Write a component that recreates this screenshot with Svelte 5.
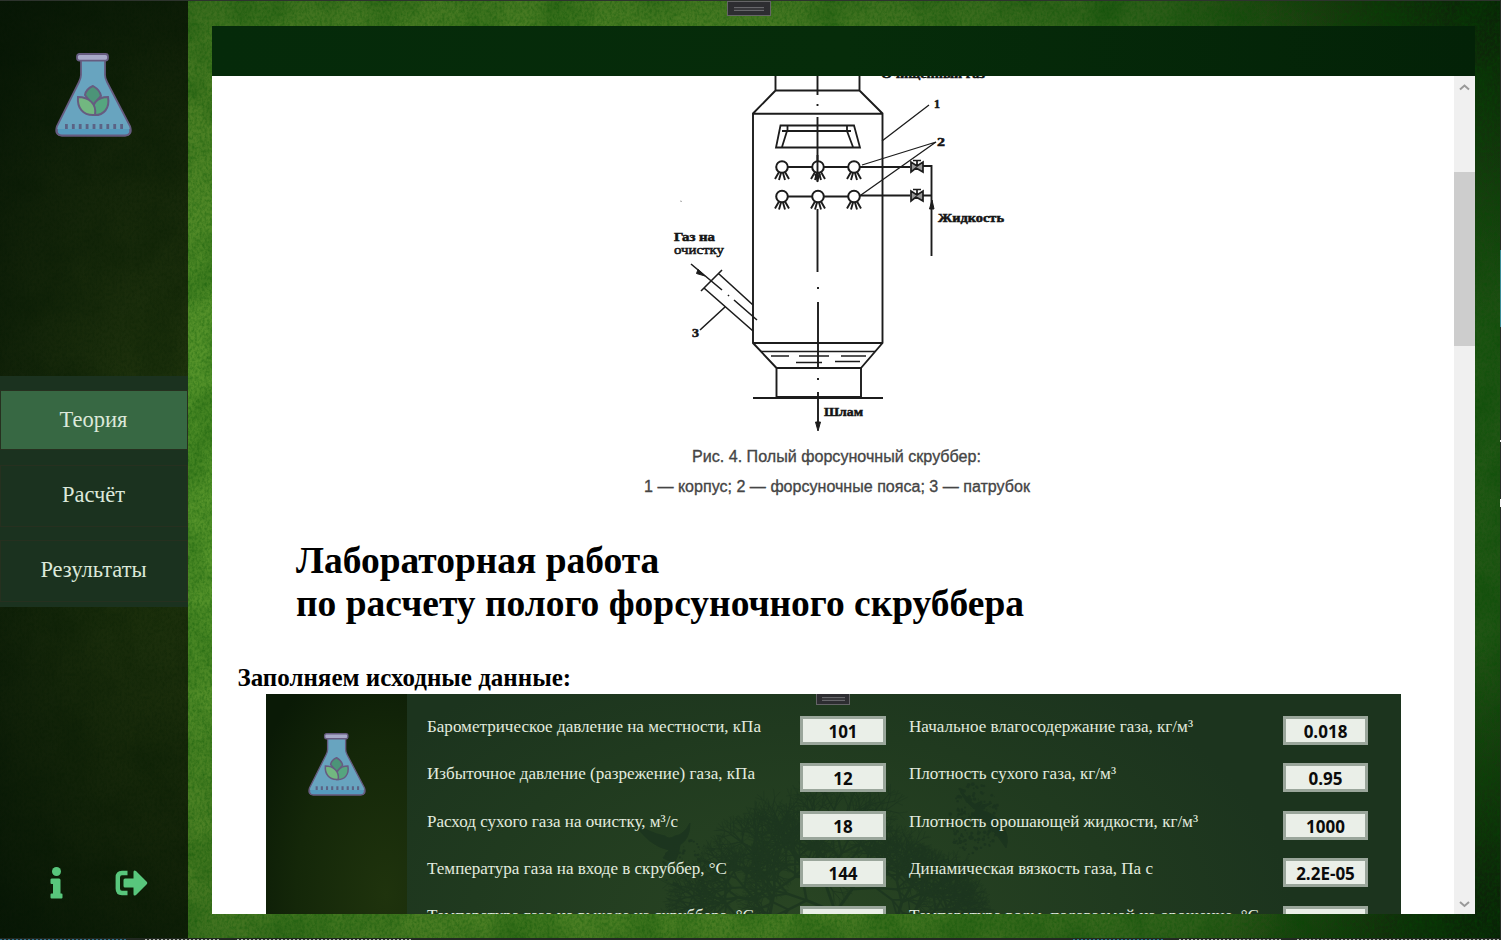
<script>
  const nav = ['Теория', 'Расчёт', 'Результаты'];
  let active = $state('Теория');

  const rows = [
    ['Барометрическое давление на местности, кПа', '101', 'Начальное влагосодержание газа, кг/м³', '0.018', 334, 284],
    ['Избыточное давление (разрежение) газа, кПа', '12', 'Плотность сухого газа, кг/м³', '0.95', 328, 207],
    ['Расход сухого газа на очистку, м³/с', '18', 'Плотность орошающей жидкости, кг/м³', '1000', 251, 289],
    ['Температура газа на входе в скруббер, °С', '144', 'Динамическая вязкость газа, Па с', '2.2E-05', 300, 244],
    ['Температура газа на выходе из скруббера, °С', '', 'Температура воды, подаваемой на орошение, °С', '', 327, 350]
  ];

  let seed = 11;
  const rnd = () => (seed = (seed * 16807) % 2147483647) / 2147483647;

  function grow(x, y, a, len, depth, out) {
    const x2 = x + Math.cos(a) * len;
    const y2 = y + Math.sin(a) * len;
    out[depth] = (out[depth] ?? '') + `M${x.toFixed(1)} ${y.toFixed(1)}L${x2.toFixed(1)} ${y2.toFixed(1)}`;
    if (depth === 0) return;
    const n = depth > 4 ? 3 : 2 + (rnd() > 0.4 ? 1 : 0);
    for (let i = 0; i < n; i++) {
      const spread = (i - (n - 1) / 2) * 0.75 + (rnd() - 0.5) * 0.6;
      grow(x2, y2, a + spread, len * (0.64 + rnd() * 0.24), depth - 1, out);
    }
  }
  const branches = [];
  grow(575, 260, -1.7, 42, 7, branches);
  grow(525, 258, -2.2, 38, 7, branches);
  grow(605, 258, -0.8, 34, 7, branches);

  const specks = (cx, cy, rx, ry, n) =>
    Array.from({ length: n }, () => {
      const t = rnd() * 6.28, r = Math.sqrt(rnd());
      return { x: cx + Math.cos(t) * r * rx, y: cy + Math.sin(t) * r * ry, r: 0.4 + rnd() * 1.5 };
    });
  const dust = [...specks(708, 125, 26, 36, 190), ...specks(425, 172, 30, 26, 90)];

  const jets = [[782, 167], [818, 167], [854, 167], [782, 196.5], [818, 196.5], [854, 196.5]];
</script>

{#snippet flask()}
  <svg class="flask" viewBox="0 0 77 84">
    <path d="M26 7H50V22Q50 25 52 29L75 73Q78 82 70 82.500H7Q-1 82 2 73L24 29Q26 25 26 22Z" fill="#68a4bf" stroke="#665c80" stroke-width="1.800" />
    <path d="M3 76H74Q75 82 70 82H7Q2 82 3 76Z" fill="#559abd" />
    <path d="M2 76Q1 82.500 7 82.500H70Q76 82.500 75 76" fill="none" stroke="#665c80" stroke-width="1.800" />
    <rect x="22" y="1" width="31" height="6.600" rx="2.500" fill="#a7a9c8" stroke="#665c80" stroke-width="1.800" />
    <path d="M10 73.500H69" stroke="#5b6385" stroke-width="5" stroke-dasharray="2.800 4.100" />
    <path d="M30 42Q31 36 38 33Q45 37 46 43L38 52Z" fill="#4c9478" stroke="#665c80" stroke-width="2" />
    <path d="M38 62C36 51 42 44 53 44C55 55 49 63 38 62Z" fill="#55a57f" stroke="#665c80" stroke-width="2" />
    <path d="M38 62C28 62 22 55 23 44C34 44 42 51 40 62Z" fill="#72b780" stroke="#665c80" stroke-width="2" />
  </svg>
{/snippet}

<div class="window">
  <svg class="grain" width="1501" height="940">
    <filter id="grain" x="0" y="0" width="100%" height="100%">
      <feTurbulence type="fractalNoise" baseFrequency="0.4 0.3" numOctaves="3" seed="4" />
      <feColorMatrix values="0 0 0 0 0  0 0 0 0 0.080  0 0 0 0 0  0.750 0 0 0 -0.27" />
    </filter>
    <filter id="blotch" x="0" y="0" width="100%" height="100%">
      <feTurbulence type="fractalNoise" baseFrequency="0.022" numOctaves="4" seed="9" />
      <feColorMatrix values="0 0 0 0 0  0 0 0 0 0.060  0 0 0 0 0  0.700 0 0 0 -0.27" />
    </filter>
    <rect width="1501" height="940" filter="url(#grain)" />
    <rect width="1501" height="940" filter="url(#blotch)" />
  </svg>
  <aside>
    <div class="logo">{@render flask()}</div>
    <nav>
      {#each nav as item}
        <button class:active={active === item} onclick={() => (active = item)}>{item}</button>
      {/each}
    </nav>
    <div class="tools">
      <svg width="13" height="32" viewBox="0 0 13 32" fill="#58c77c">
        <circle cx="6.500" cy="4.500" r="4.500" />
        <path d="M2 11.500H9Q10.500 11.500 10.500 13V26.500H11.500Q12.500 26.500 12.500 27.500V30.500Q12.500 31.500 11.500 31.500H1.500Q.5 31.500 .5 30.500V27.500Q.5 26.500 1.500 26.500H3V17H1.500Q.5 17 .5 16V12.500Q.5 11.500 2 11.500Z" />
      </svg>
      <svg width="33" height="26" viewBox="0 0 33 26" fill="#58c77c">
        <path d="M12.500 3H7Q2.800 3 2.800 7.500V18.500Q2.800 23 7 23H12.500" fill="none" stroke="#58c77c" stroke-width="4.400" stroke-linejoin="round" />
        <path d="M10 8.500H18.500V2Q18.500-.5 21 1L31.500 11.500Q33 13 31.500 14.500L21 25Q18.500 26.500 18.500 24V17.500H10Q8.500 17.500 8.500 16V10Q8.500 8.500 10 8.500Z" />
      </svg>
    </div>
  </aside>

  <main>
    <header></header>
    <div class="viewer">
      <article>
        <svg class="figure" viewBox="640 76 400 434" width="400" height="434" fill="none" stroke="#1c1c1c" stroke-width="1.900">
          <g class="label big"><text x="881" y="77.500" textLength="104" lengthAdjust="spacingAndGlyphs">Очищенный газ</text></g>
          <path d="M775.500 76V90.500L753 113.500V343L776.500 368V397M859.500 76V90.500L882.500 113.500V343L861 368V397M775 90.500H860M753 113.800H883M753 343H883M776 368H862M753 398H883M777 397H861" />
          <path d="M817.500 76V95M817.500 104V106M817.500 117V182M817.500 209V272M818 287V289M818 302V367M818 378V380M818 392V424" />
          <path d="M780.500 125.500H854L860 147.500H776ZM787.500 125V131M847 125V131M787 131L782 147M847 131L853 147M782 131H851" stroke-width="1.800" />
          <path d="M788 167H812M824 167H848M860 167H910M923 166H931.500M788 196.500H812M824 196.500H848M860 195.500H910M923 195.500H931" />
          <path d="M931.500 165V256" />
          <path d="M882 141L929 105M862 165L936 142L861 195" stroke-width="1.300" />
          {#each jets as [x, y]}
            <circle cx={x} cy={y} r="5.800" fill="#fff" stroke-width="2" />
            <path d="M{x - 3} {y + 5}L{x - 7} {y + 12}M{x - 1} {y + 6}L{x - 3} {y + 13}M{x + 1} {y + 6}L{x + 3} {y + 13}M{x + 3} {y + 5}L{x + 7} {y + 12}" stroke-width="1.900" />
          {/each}
          <path d="M817.500 155V181M815 174L817.500 180L820 174" />
          {#each [166, 195] as y}
            <path d="M911 {y - 4}V{y + 6}L916 {y + 2}L923 {y + 6}V{y - 4}L917 {y}ZM917 {y}V{y - 5}M913 {y - 5.5}H921" fill="#999" stroke-width="1.700" />
          {/each}
          <path d="M932 200L929.500 209H934ZM818 431L815.500 422H820.500ZM705 276L698 269.500L696.500 273.500Z" fill="#1c1c1c" stroke-width="1" />
          <path d="M691 264L722 290M728 295L729 296M734 300L757 320M719 274L753 305M704 288L753 331M701 291L722 270M725 307L700 330" stroke-width="1.600" />
          <path d="M761 351.500H875" stroke-width="1.700" />
          <path d="M771 356H789M799 356H829M841 356H866M796 362.500H822M835 361.500H860" stroke-width="1.700" />
          <path d="M680 201L682 201.500" stroke="#aaa" stroke-width="1" />
          <g class="label">
            <text x="674" y="241" textLength="41" lengthAdjust="spacingAndGlyphs">Газ на</text>
            <text class="soft" x="674" y="254" textLength="50" lengthAdjust="spacingAndGlyphs">очистку</text>
            <text x="938" y="222" textLength="66" lengthAdjust="spacingAndGlyphs">Жидкость</text>
            <text x="824" y="416" textLength="39" lengthAdjust="spacingAndGlyphs">Шлам</text>
            <text x="934" y="108">1</text>
            <text x="937" y="146" textLength="8" lengthAdjust="spacingAndGlyphs">2</text>
            <text x="692" y="337" textLength="7" lengthAdjust="spacingAndGlyphs">3</text>
          </g>
          <g class="caption">
            <text x="692" y="461.500" textLength="289" lengthAdjust="spacingAndGlyphs">Рис. 4. Полый форсуночный скруббер:</text>
            <text x="644" y="492" textLength="386" lengthAdjust="spacingAndGlyphs">1 — корпус; 2 — форсуночные пояса; 3 — патрубок</text>
          </g>
        </svg>

        <h1>Лабораторная работа<br />по расчету полого форсуночного скруббера</h1>
        <h2>Заполняем исходные данные:</h2>

        <section class="shot">
          <div class="shot-side">{@render flask()}</div>
          <div class="form">
            <svg class="scene" width="1135" height="220" viewBox="0 0 1135 220" stroke="#18301e" fill="#18301e">
              {#each branches as d, i}
                <path {d} stroke-width={0.5 + i * 0.4} fill="none" />
              {/each}
              <path d="M366 126Q382 139 399 142Q403 146 409 142Q418 141 424 129Q424 145 414 151Q413 162 408 169L397 164L403 156Q382 152 366 126Z" />
              <path d="M693 94L703 106L711 112L726 109L714 116Q729 119 736 130Q744 142 740 154Q732 140 718 128L706 122L710 116Q698 108 693 94Z" />
              {#each dust as p}<circle cx={p.x} cy={p.y} r={p.r} stroke="none" />{/each}
            </svg>
            {#each rows as [a, av, b, bv, aw, bw], i}
              <div class="row">
                <svg class="cell" width="373" height="29"><text x="0" y={i === 4 ? 15.2 : 16} textLength={aw} lengthAdjust="spacingAndGlyphs">{a}</text></svg>
                <output>{av}</output>
                <svg class="cell second" width="374" height="29"><text x="0" y={i === 4 ? 15.2 : 16} textLength={bw} lengthAdjust="spacingAndGlyphs">{b}</text></svg>
                <output>{bv}</output>
              </div>
            {/each}
            <i class="grip small"></i>
          </div>
        </section>
      </article>
      <div class="scroll">
        <svg width="21" height="21" viewBox="0 0 21 21"><path d="M6 13.500L10.500 9.500L15 13.500" /></svg>
        <div class="thumb"></div>
        <svg width="21" height="21" viewBox="0 0 21 21"><path d="M6 9L10.500 13L15 9" /></svg>
      </div>
    </div>
  </main>

  <i class="grip"></i>
  <i class="edge top"></i>
  <i class="edge right"></i>
  <i class="edge bottom"></i>
</div>

<style>
  :global(body) { margin: 0; overflow: hidden; }
  .window {
    position: relative;
    isolation: isolate;
    display: grid;
    grid-template-columns: 188px 1fr;
    width: 1501px;
    height: 940px;
    overflow: hidden;
    background:
      radial-gradient(circle 330px at 1501px 0, rgba(5, 20, 5, .65), transparent),
      radial-gradient(circle 300px at 1501px 940px, rgba(5, 20, 5, .75), transparent),
      linear-gradient(90deg, transparent 82%, rgba(0, 70, 10, .25) 98%),
      radial-gradient(ellipse 950px 640px at 570px 480px, #5b9b2b 0%, #55932a 42%, #4a7d23 70%, #2e5e19 95%, #163009 125%);
    font-family: "Liberation Serif", serif;
  }
  .grain { position: absolute; inset: 0; z-index: -1; }
  aside {
    display: flex;
    flex-direction: column;
    background:
      radial-gradient(ellipse 230px 560px at 150px 480px, rgba(60, 40, 0, .12), rgba(0, 8, 0, .5)),
      linear-gradient(90deg, rgba(6, 20, 6, .76), rgba(6, 16, 4, .68));
  }
  .logo { height: 376px; padding: 53px 0 0 55px; box-sizing: border-box; }
  .logo .flask { width: 77px; height: 84px; }
  .flask { display: block; }
  nav {
    display: flex;
    flex-direction: column;
    gap: 13px;
    height: 231px;
    margin-bottom: 1px;
    padding: 14px 0 0;
    box-sizing: border-box;
    background: #1b321f;
  }
  nav button {
    height: 62px;
    padding: 0 1px 2px 0;
    border: 1px solid #26301f;
    background: transparent;
    color: #dce8da;
    font: 22.500px "Liberation Serif", serif;
  }
  nav button.active { height: 60px; margin-bottom: 2px; padding-bottom: 0; background: #376843; }
  .tools { display: flex; align-items: center; gap: 52px; padding: 259px 0 0 50px; }
  main { display: flex; flex-direction: column; padding: 26px 26px 26px 24px; }
  header { height: 50px; background: linear-gradient(90deg, #052a0a, #062c0a 50%, #032207); }
  .viewer { display: flex; height: 838px; background: #fff; overflow: hidden; }
  article { flex: 1; min-width: 0; height: 838px; overflow: hidden; }
  .figure { display: block; margin-left: 428px; }
  .label { font: bold 12px "Liberation Serif", serif; fill: #151515; stroke: #151515; stroke-width: .5; }
  .label .soft { font-weight: normal; }
  .big { font-size: 13px; }
  .caption { font: 17.300px "Liberation Sans", sans-serif; fill: #454545; stroke: #454545; stroke-width: .35; }
  h1 { margin: 29px 0 0 84px; font-size: 37.480px; line-height: 43px; color: #000; }
  h2 { margin: 38px 0 0 25.500px; font-size: 25px; line-height: 30px; color: #000; }
  .shot {
    display: flex;
    width: 1135px;
    height: 260px;
    margin: 1px 0 0 54px;
    background: radial-gradient(ellipse 500px 300px at 530px 230px, #294523, #203a1f 65%, #1c341e);
  }
  .shot-side { width: 141px; padding: 39px 0 0 42px; box-sizing: border-box; background: radial-gradient(ellipse 150px 250px at 120px 200px, #1f330d, #142709 60%, #0a1a06); }
  .shot-side .flask { width: 58px; height: 63px; }
  .form { position: relative; flex: 1; padding: 22px 0 0 20px; }
  .scene { position: absolute; left: -141px; top: 0; opacity: .6; }
  .row { position: relative; display: flex; height: 29px; margin-bottom: 18.400px; }
  .cell { display: block; overflow: visible; font: 17.300px "Liberation Serif", serif; fill: #e2ebdf; }
  .second { margin-left: 23px; }
  output {
    width: 86px;
    height: 29px;
    box-sizing: border-box;
    border: 3px solid #9aa69b;
    background: rgba(243, 247, 240, .96);
    color: #0b0b0b;
    font: bold 17px/25px "Open Sans", sans-serif;
    text-align: center;
  }
  output:last-child { width: 85px; }
  .scroll { display: flex; flex-direction: column; width: 21px; background: #f0f0f0; }
  .scroll svg { display: block; }
  .scroll path { fill: none; stroke: #999; stroke-width: 2; }
  .thumb { height: 174px; margin: 75px 0 547px; background: #cdcdcd; }
  .grip {
    position: absolute;
    left: 727px;
    top: 1px;
    width: 44px;
    height: 15px;
    box-sizing: border-box;
    border: 1px solid #646466;
    background: linear-gradient(#67676b 0 1px, #38383c 1px 3px, #67676b 3px 4px) center / 30px 4px no-repeat, #2d2d31;
  }
  .grip.small { left: 409px; top: 0; width: 34px; height: 11px; border-top: 0; background-size: 23px 4px; }
  .edge { position: absolute; }
  .edge.top { inset: 0 0 auto; height: 1px; background: #2d332d; }
  .edge.right { inset: 0 0 0 auto; width: 1px; background: linear-gradient(transparent 250px, #3c8c96 250px 327px, transparent 327px 440px, #eee 440px 442px, transparent 442px 499px, #eee 499px 507px, transparent 507px), #252d25; }
  .edge.bottom {
    inset: auto 0 0;
    height: 2px;
    background:
      repeating-linear-gradient(90deg, #2f7391 0 2px, transparent 2px 4px) 0 1px / 126px 1px no-repeat,
      repeating-linear-gradient(90deg, #b4b8b4 0 2px, transparent 2px 4px) 145px 1px / 76px 1px no-repeat,
      repeating-linear-gradient(90deg, #b4b8b4 0 2px, transparent 2px 4px) 237px 1px / 174px 1px no-repeat,
      repeating-linear-gradient(90deg, #2f7391 0 2px, transparent 2px 4px) 1073px 1px / 92px 1px no-repeat,
      repeating-linear-gradient(90deg, #b4b8b4 0 2px, transparent 2px 4px) 1179px 1px / 104px 1px no-repeat,
      repeating-linear-gradient(90deg, #b4b8b4 0 2px, transparent 2px 4px) 1297px 1px / 204px 1px no-repeat,
      #222922;
  }
</style>
